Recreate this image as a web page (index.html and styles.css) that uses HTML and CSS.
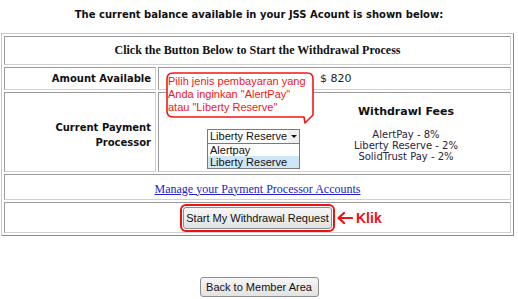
FILE: index.html
```html
<!DOCTYPE html>
<html>
<head>
<meta charset="utf-8">
<link rel="stylesheet" href="styles.css">
</head>
<body>
<div class="page">
  <div class="title">The current balance available in your JSS Acount is shown below:</div>
  <table class="wd">
    <colgroup>
      <col class="col-label">
      <col class="col-value">
    </colgroup>
    <tr>
      <td colspan="2" class="head r1">Click the Button Below to Start the Withdrawal Process</td>
    </tr>
    <tr>
      <td class="label r2">Amount Available</td>
      <td class="amount r2">$ 820</td>
    </tr>
    <tr>
      <td class="label label-proc r3">Current Payment<br>Processor</td>
      <td class="proc r3">
        <div class="proc-inner">
          <div class="select-wrap">
            <div class="select"><span class="select-text">Liberty Reserve</span><span class="select-btn"><span class="tri"></span></span></div>
            <ul class="options">
              <li>Alertpay</li>
              <li class="sel">Liberty Reserve</li>
            </ul>
          </div>
          <div class="fees">
            <div class="fees-title">Withdrawl Fees</div>
            <div class="fees-list">AlertPay - 8%<br>Liberty Reserve - 2%<br>SolidTrust Pay - 2%</div>
          </div>
        </div>
      </td>
    </tr>
    <tr>
      <td colspan="2" class="center r4"><a class="link" href="#">Manage your Payment Processor Accounts</a></td>
    </tr>
    <tr>
      <td colspan="2" class="center r5">
        <span class="btn-wrap">
          <button class="btn btn-start">Start My Withdrawal Request</button>
          <span class="ring"></span>
          <span class="callout">
            <svg class="arrow" width="16" height="12" viewBox="0 0 16 12"><path d="M15 6 H2 M7 1 L1.5 6 L7 11" fill="none" stroke="#f01010" stroke-width="2.2" stroke-linecap="round" stroke-linejoin="round"/></svg>
            <span class="klik">Klik</span>
          </span>
        </span>
      </td>
    </tr>
  </table>
  <div class="back"><button class="btn btn-back">Back to Member Area</button></div>

  <div class="balloon">
    <svg class="balloon-shape" width="156" height="58" viewBox="0 0 156 58"><path d="M9 3 H143 Q149 3 149 9 V45 L141 53 L140 47 H9 Q3 47 3 41 V9 Q3 3 9 3 Z" fill="#fff" stroke="#f01818" stroke-width="1.6" stroke-linejoin="round"/></svg>
    <div class="balloon-text">Pilih jenis pembayaran yang<br>Anda inginkan "AlertPay"<br>atau "Liberty Reserve"</div>
  </div>
</div>
</body>
</html>
```

FILE: styles.css
```css
html, body {
  margin: 0;
  padding: 0;
  background: #fff;
}

.page {
  position: relative;
  width: 518px;
  height: 299px;
  overflow: hidden;
  font-family: "DejaVu Sans", Verdana, sans-serif;
  color: #000;
}

.title {
  padding-top: 8px;
  height: 13px;
  font-size: 10px;
  line-height: 13px;
  font-weight: bold;
  text-align: center;
  color: #111;
  white-space: nowrap;
}

.wd {
  margin-top: 12px;
  margin-left: 1px;
  width: 513px;
  border-collapse: separate;
  border-spacing: 2px;
  border: 1px solid;
  border-color: #c8c8c8 #8a8a8a #8a8a8a #c8c8c8;
  table-layout: fixed;
}

.col-label {
  width: 152px;
}

.wd td {
  box-sizing: border-box;
  padding: 0;
  border: 1px solid;
  border-color: #9a9a9a #d0d0d0 #d0d0d0 #9a9a9a;
}

.r1 { height: 29px; }
.r2 { height: 23px; }
.r3 { height: 80px; }
.r4 { height: 26px; }
.r5 { height: 31px; }

.wd td.label {
  text-align: right;
  padding-right: 4px;
  font-size: 10px;
  line-height: 15px;
  font-weight: bold;
  color: #111;
  vertical-align: middle;
  white-space: nowrap;
}

.wd td.label-proc {
  padding-top: 5px;
}

.head {
  text-align: center;
  font-family: "Liberation Serif", "Times New Roman", serif;
  font-weight: bold;
  font-size: 12px;
  color: #111;
  white-space: nowrap;
}

.wd td.amount {
  padding-left: 161px;
  font-size: 11px;
  color: #222;
  vertical-align: middle;
}

.wd td.proc {
  vertical-align: top;
}

.proc-inner {
  display: flex;
  align-items: flex-start;
}

.select-wrap {
  flex: none;
  margin-left: 48px;
  margin-top: 36px;
  width: 93px;
  font-family: "Liberation Sans", Arial, sans-serif;
  font-size: 11px;
  white-space: nowrap;
}

.select {
  box-sizing: border-box;
  height: 15px;
  border: 1px solid #7a7a7a;
  display: flex;
  align-items: center;
  justify-content: space-between;
  padding-left: 2px;
  color: #111;
  line-height: 13px;
}

.select-btn {
  width: 11px;
  height: 13px;
  display: flex;
  align-items: center;
  justify-content: center;
  background: #f0f0f0;
}

.tri {
  width: 0;
  height: 0;
  border-left: 3px solid transparent;
  border-right: 3px solid transparent;
  border-top: 3px solid #111;
}

.options {
  list-style: none;
  margin: 0;
  padding: 0;
  border: 1px solid #7a7a7a;
  border-top: none;
  box-sizing: border-box;
}

.options li {
  height: 12px;
  line-height: 12px;
  padding-left: 2px;
  color: #111;
}

.options li.sel {
  background: #cfe6f7;
}

.fees {
  flex: none;
  margin-left: 46px;
  margin-top: 12px;
  width: 120px;
  text-align: center;
  white-space: nowrap;
}

.fees-title {
  font-size: 11px;
  line-height: 14px;
  font-weight: bold;
  color: #111;
}

.fees-list {
  margin-top: 10px;
  font-size: 10px;
  line-height: 11px;
  color: #2a2440;
}

.center {
  text-align: center;
  vertical-align: middle;
}

.link {
  font-family: "Liberation Serif", "Times New Roman", serif;
  font-size: 12px;
  color: #2222cc;
  text-decoration: underline;
}

.btn-wrap {
  position: relative;
  display: inline-block;
  vertical-align: middle;
}

.btn {
  font-family: "Liberation Sans", Arial, sans-serif;
  font-size: 11px;
  color: #111;
  border: 1px solid #8e8e8e;
  border-radius: 3px;
  background: linear-gradient(#f6f6f6, #e2e2e2);
  padding: 0;
  margin: 0;
  display: block;
  white-space: nowrap;
}

.btn-start {
  width: 149px;
  height: 22px;
}

.ring {
  position: absolute;
  left: -3px;
  right: -3px;
  top: -3px;
  bottom: -3px;
  border: 2px solid #f01010;
  border-radius: 6px;
}

.callout {
  position: absolute;
  left: calc(100% + 5px);
  top: 0;
  height: 22px;
  display: flex;
  align-items: center;
  gap: 3px;
}

.arrow {
  display: block;
}

.klik {
  font-family: "Liberation Sans", Arial, sans-serif;
  font-weight: bold;
  font-size: 14px;
  color: #f01010;
}

.back {
  margin-top: 41px;
  display: flex;
  justify-content: center;
}

.btn-back {
  width: 119px;
  height: 20px;
}

.balloon {
  position: absolute;
  left: 164px;
  top: 70px;
  width: 156px;
  height: 58px;
}

.balloon-shape {
  position: absolute;
  left: 0;
  top: 0;
}

.balloon-text {
  position: absolute;
  left: 4px;
  top: 5px;
  font-family: "Liberation Sans", Arial, sans-serif;
  font-size: 11px;
  line-height: 13px;
  color: #f01818;
  white-space: nowrap;
}
```
